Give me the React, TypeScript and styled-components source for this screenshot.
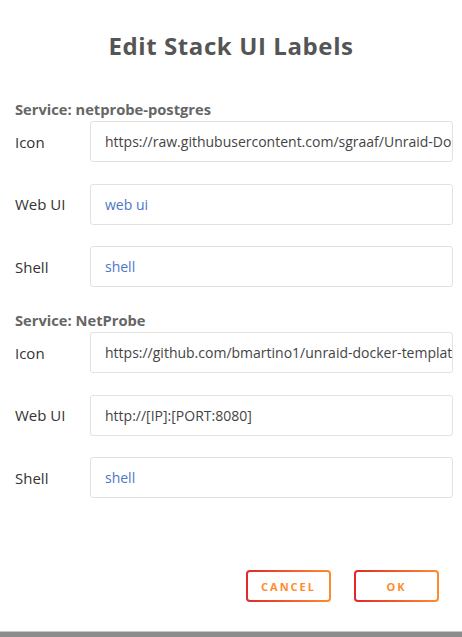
import React from 'react'
import styled, { createGlobalStyle } from 'styled-components'

const GlobalStyle = createGlobalStyle`
  html, body {
    margin: 0;
    padding: 0;
    background: #fff;
  }
  body {
    font-family: 'Open Sans', 'Noto Sans', 'Liberation Sans', sans-serif;
  }
`

const Dialog = styled.div`
  display: flex;
  flex-direction: column;
  min-height: 100vh;
  box-sizing: border-box;
`

const Title = styled.h2`
  margin: 0;
  padding-top: 30px;
  line-height: 32px;
  font-size: 24px;
  font-weight: 700;
  letter-spacing: 0.6px;
  color: #555;
  text-align: center;
`

const Form = styled.div`
  display: flex;
  flex-direction: column;
  gap: 24px;
  margin-top: 38px;
  padding: 0 9px 0 15px;
`

const Section = styled.section`
  display: flex;
  flex-direction: column;
`

const SectionHeading = styled.h3`
  margin: 0 0 3px;
  font-size: 14.7px;
  line-height: 18px;
  font-weight: 700;
  color: #666;
`

const Rows = styled.div`
  display: flex;
  flex-direction: column;
  gap: 21.5px;
`

const Row = styled.label`
  display: flex;
  align-items: center;
`

const FieldLabel = styled.span`
  width: 75px;
  flex: none;
  font-size: 15px;
  color: #333;
`

const Input = styled.input<{ $hint?: boolean }>`
  flex: 1;
  min-width: 0;
  height: 41px;
  box-sizing: border-box;
  padding: 0 0 0 14px;
  border: 1px solid #e2e2e2;
  border-radius: 3px;
  font-family: inherit;
  font-size: 14px;
  color: ${({ $hint }) => ($hint ? '#4d77c6' : '#444')};
  background: #fff;
  outline: none;
`

const Actions = styled.div`
  display: flex;
  justify-content: flex-end;
  gap: 23px;
  margin-top: 72px;
  padding-right: 23px;
`

const Button = styled.button`
  width: 85px;
  height: 32px;
  box-sizing: border-box;
  border: 2px solid transparent;
  border-radius: 4px;
  background:
    linear-gradient(#fff, #fff) padding-box,
    linear-gradient(90deg, #e22828, #ff8c2f) border-box;
  font-family: inherit;
  font-size: 11px;
  font-weight: 700;
  letter-spacing: 2px;
  text-transform: uppercase;
  color: #ff8c2f;
  cursor: pointer;
`

const Footer = styled.div`
  margin-top: auto;
  height: 5px;
  border-top: 1px solid #c8c8c8;
  background: #8c8c8c;
`

type Field = { label: string; value: string; hint?: boolean }

const services: { name: string; fields: Field[] }[] = [
  {
    name: 'netprobe-postgres',
    fields: [
      {
        label: 'Icon',
        value:
          'https://raw.githubusercontent.com/sgraaf/Unraid-Docker-Templates/main/sgraaf-repository/images/postgresql.png',
      },
      { label: 'Web UI', value: 'web ui', hint: true },
      { label: 'Shell', value: 'shell', hint: true },
    ],
  },
  {
    name: 'NetProbe',
    fields: [
      {
        label: 'Icon',
        value:
          'https://github.com/bmartino1/unraid-docker-templates/raw/main/images/netprobe.png',
      },
      { label: 'Web UI', value: 'http://[IP]:[PORT:8080]' },
      { label: 'Shell', value: 'shell', hint: true },
    ],
  },
]

export default function App() {
  return (
    <Dialog>
      <GlobalStyle />
      <Title>Edit Stack UI Labels</Title>
      <Form>
        {services.map((service) => (
          <Section key={service.name}>
            <SectionHeading>Service: {service.name}</SectionHeading>
            <Rows>
              {service.fields.map((field) => (
                <Row key={field.label}>
                  <FieldLabel>{field.label}</FieldLabel>
                  <Input defaultValue={field.value} $hint={field.hint} />
                </Row>
              ))}
            </Rows>
          </Section>
        ))}
      </Form>
      <Actions>
        <Button>Cancel</Button>
        <Button>Ok</Button>
      </Actions>
      <Footer />
    </Dialog>
  )
}
